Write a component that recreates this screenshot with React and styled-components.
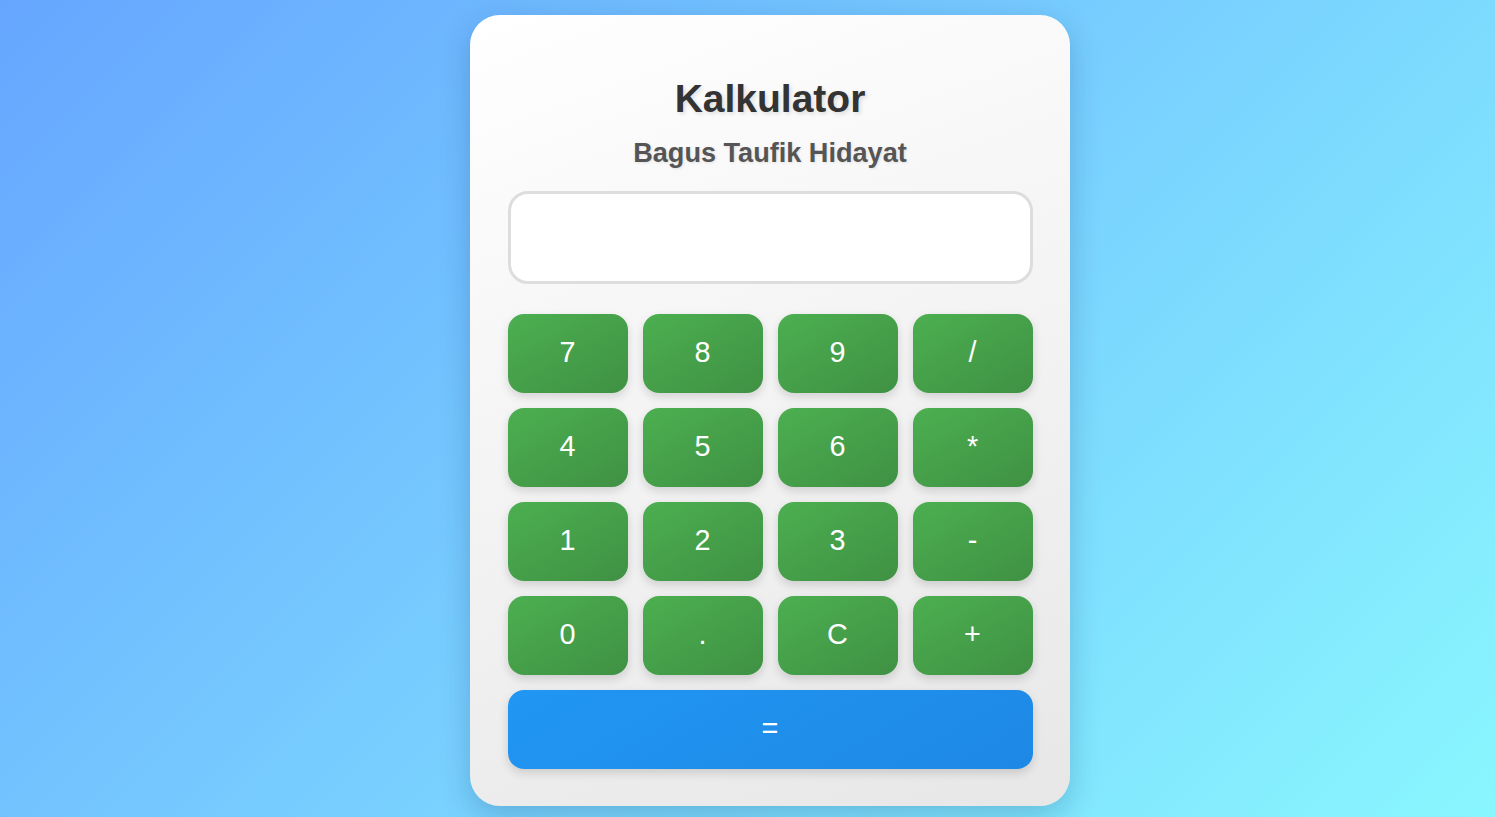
import React, { useState } from 'react'
import styled, { createGlobalStyle } from 'styled-components'

const GlobalStyle = createGlobalStyle`
    * {
        box-sizing: border-box;
    }

    body {
        margin: 0;
        font-family: "Liberation Sans", Arial, sans-serif;
        background: linear-gradient(135deg, #66a6ff 0%, #89f7fe 100%);
        min-height: 100vh;
        overflow: hidden;
    }
`

const keys = ['7', '8', '9', '/', '4', '5', '6', '*', '1', '2', '3', '-', '0', '.', 'C', '+']

const App = () => {
    const [value, setValue] = useState('')

    const press = (key) => {
        if (key === 'C') return setValue('')
        setValue(value + key)
    }

    const calculate = () => {
        try {
            // eslint-disable-next-line no-new-func
            setValue(String(Function(`return (${value})`)()))
        } catch (e) {
            setValue('Error')
        }
    }

    return (
        <Page>
            <GlobalStyle />
            <Card>
                <Title>Kalkulator</Title>
                <Subtitle>Bagus Taufik Hidayat</Subtitle>
                <Display type="text" value={value} readOnly />
                <Keypad>
                    {keys.map((key) => (
                        <Key key={key} onClick={() => press(key)}>
                            {key}
                        </Key>
                    ))}
                    <Key $wide $equals onClick={calculate}>=</Key>
                </Keypad>
            </Card>
        </Page>
    )
}

const Page = styled.div`
    display: flex;
    justify-content: center;
    align-items: flex-start;
    min-height: 100vh;
    padding: 15px 0 0 45px;
`

const Card = styled.div`
    width: 600px;
    padding: 38px 37.5px 37px;
    border-radius: 30px;
    background: linear-gradient(160deg, #ffffff 0%, #e7e7e7 100%);
    box-shadow: 0 10px 30px rgba(0, 40, 90, 0.22);
    text-align: center;
`

const Title = styled.h1`
    margin: 24px 0 16px;
    font-size: 39px;
    line-height: 44px;
    font-weight: 700;
    color: #333;
    text-shadow: 2px 2px 4px rgba(0, 0, 0, 0.12);
`

const Subtitle = styled.h2`
    margin: 0 0 23px;
    font-size: 27.1px;
    line-height: 31px;
    font-weight: 700;
    color: #555;
    text-shadow: 1px 1px 3px rgba(0, 0, 0, 0.1);
`

const Display = styled.input`
    display: block;
    width: 100%;
    height: 93px;
    margin: 0 0 30px;
    padding: 0 20px;
    border: 3px solid #dddddd;
    border-radius: 20px;
    background: #ffffff;
    font-family: "Liberation Sans", Arial, sans-serif;
    font-size: 36px;
    text-align: right;
    color: #333;
    outline: none;
`

const Keypad = styled.div`
    display: grid;
    grid-template-columns: repeat(4, 1fr);
    grid-auto-rows: 79px;
    gap: 15px;
`

const Key = styled.button`
    grid-column: ${({ $wide }) => ($wide ? 'span 4' : 'auto')};
    display: flex;
    align-items: center;
    justify-content: center;
    border: none;
    border-radius: 16px;
    background: ${({ $equals }) =>
        $equals
            ? 'linear-gradient(150deg, #2196f3 0%, #1e88e5 100%)'
            : 'linear-gradient(150deg, #4caf50 0%, #3f9143 100%)'};
    box-shadow: 0 4px 10px rgba(0, 0, 0, 0.14);
    color: #ffffff;
    font-family: "Liberation Sans", Arial, sans-serif;
    font-size: 28.8px;
    cursor: pointer;
    padding: 0 0 3px;
`

export default App
